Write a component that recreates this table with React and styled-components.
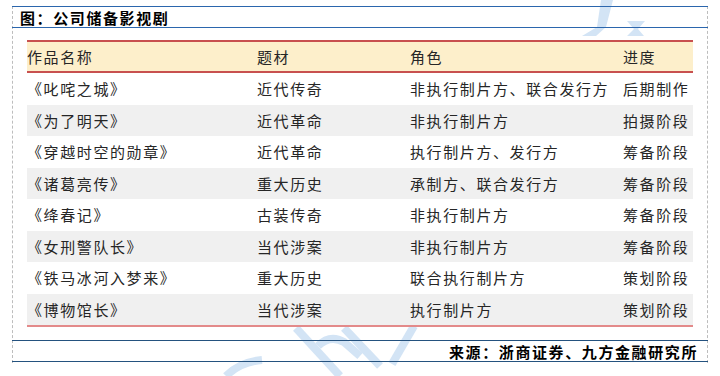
import React from 'react'
import styled, { createGlobalStyle } from 'styled-components'

const GlobalStyle = createGlobalStyle`
  html, body {
    margin: 0;
    padding: 0;
    background: #fff;
  }
  body {
    font-family: "Noto Sans CJK SC", "Noto Sans", sans-serif;
    color: #222;
  }
`

const rows = [
  { name: '《叱咤之城》', genre: '近代传奇', role: '非执行制片方、联合发行方', stage: '后期制作' },
  { name: '《为了明天》', genre: '近代革命', role: '非执行制片方', stage: '拍摄阶段' },
  { name: '《穿越时空的勋章》', genre: '近代革命', role: '执行制片方、发行方', stage: '筹备阶段' },
  { name: '《诸葛亮传》', genre: '重大历史', role: '承制方、联合发行方', stage: '筹备阶段' },
  { name: '《绛春记》', genre: '古装传奇', role: '非执行制片方', stage: '筹备阶段' },
  { name: '《女刑警队长》', genre: '当代涉案', role: '非执行制片方', stage: '筹备阶段' },
  { name: '《铁马冰河入梦来》', genre: '重大历史', role: '联合执行制片方', stage: '策划阶段' },
  { name: '《博物馆长》', genre: '当代涉案', role: '执行制片方', stage: '策划阶段' },
]

const Page = styled.div`
  position: relative;
  width: 720px;
  height: 376px;
  padding-top: 6px;
  box-sizing: border-box;
  overflow: hidden;
`

const Watermark = styled.svg`
  position: absolute;
  left: 0;
  top: 0;
  width: 720px;
  height: 376px;
  z-index: 0;
`

const Frame = styled.div`
  position: relative;
  z-index: 1;
  margin: 0 12px;
  height: 357px;
  border-left: 1px dashed #bdbdbd;
  border-right: 1px dashed #bdbdbd;
  display: flex;
  flex-direction: column;
`

const TitleBar = styled.div`
  height: 20px;
  border-top: 1.5px solid #2b66ad;
  border-bottom: 1.5px solid #2b66ad;
  margin-left: -1px;
  margin-right: -1px;
  padding-left: 8px;
  display: flex;
  align-items: center;
  font-size: 15px;
  font-weight: 700;
  letter-spacing: 1.6px;
  color: #000;
`

const TableWrap = styled.div`
  padding: 12px 14px 0 14px;
`

const Grid = styled.div`
  box-sizing: border-box;
  display: grid;
  grid-template-columns: 230px 153px 213px 1fr;
  align-items: center;
  height: ${p => p.$h}px;
  background: ${p => p.$bg};
  font-size: 15px;
  letter-spacing: 1.6px;
  color: #262626;
  white-space: nowrap;
`

const HeaderRow = styled(Grid)`
  border-top: 2px solid #c8504f;
  border-bottom: 2px solid #c8504f;
`

const BodyRow = styled(Grid)`
  border-bottom: ${p => (p.$last ? '2px solid #e38a8a' : 'none')};
`

const Cell = styled.div`
  overflow: visible;
`

const SourceBar = styled.div`
  margin-top: 13px;
  margin-left: -1px;
  margin-right: -1px;
  height: 20px;
  border-top: 1.5px solid #24527f;
  border-bottom: 1.5px solid #24527f;
  display: flex;
  align-items: center;
  justify-content: flex-end;
  padding-right: 10px;
  font-size: 15px;
  font-weight: 700;
  letter-spacing: 1.6px;
  color: #000;
`

const WM = '#d3e4f5'

export default function App() {
  return (
    <Page>
      <GlobalStyle />
      <Watermark viewBox="0 0 720 376">
        <polygon points="601,0 613,0 606,27 596,36 582,36 597,27" fill={WM} />
        <polygon points="627,21 645,21 638,29 644,36 627,36 634,29" fill={WM} />
        <g stroke={WM} strokeWidth="8" fill="none">
          <path d="M226 376 Q 240 362 262 360" />
          <path d="M296 328 L 340 376" />
          <path d="M318 346 Q 330 334 344 342 L 360 356" />
          <path d="M344 328 L 380 366" />
          <path d="M414 326 L 392 364" />
        </g>
      </Watermark>
      <Frame>
        <TitleBar>图：公司储备影视剧</TitleBar>
        <TableWrap>
          <HeaderRow $h={33} $bg="#fdefcb">
            <Cell>作品名称</Cell>
            <Cell>题材</Cell>
            <Cell>角色</Cell>
            <Cell>进度</Cell>
          </HeaderRow>
          {rows.map((r, i) => {
            const last = i === rows.length - 1
            return (
              <BodyRow
                key={r.name}
                $h={last ? 33.5 : 31.5}
                $bg={i % 2 === 1 ? '#f0f0f0' : '#ffffff'}
                $last={last}
              >
                <Cell>{r.name}</Cell>
                <Cell>{r.genre}</Cell>
                <Cell>{r.role}</Cell>
                <Cell>{r.stage}</Cell>
              </BodyRow>
            )
          })}
        </TableWrap>
        <SourceBar>来源：浙商证券、九方金融研究所</SourceBar>
      </Frame>
    </Page>
  )
}
